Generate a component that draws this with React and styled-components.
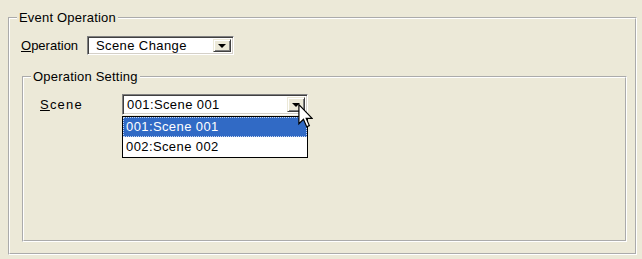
import React from 'react';
import styled, { createGlobalStyle } from 'styled-components';

const GlobalStyle = createGlobalStyle`
  html, body {
    margin: 0;
    padding: 0;
    background: #ece9d8;
  }
  body {
    width: 642px;
    height: 259px;
    overflow: hidden;
    font-family: "Liberation Sans", Arial, sans-serif;
    font-size: 13px;
    color: #000;
  }
`;

const Window = styled.div`
  padding: 10px 0 0 8px;
`;

const Group = styled.fieldset`
  box-sizing: border-box;
  min-width: 0;
  width: ${(p) => p.$w}px;
  height: ${(p) => p.$h}px;
  margin: ${(p) => p.$margin || '0'};
  padding: 0 7px;
  border: 2px groove #fff;
`;

const Legend = styled.legend`
  padding: 0 2px;
  line-height: 16px;
  letter-spacing: 0.2px;
`;

const Row = styled.div`
  display: flex;
  align-items: center;
  margin: ${(p) => p.$margin};
`;

const Label = styled.span`
  width: ${(p) => p.$w}px;
  flex: none;
  letter-spacing: ${(p) => p.$ls || 0}px;
`;

const Key = styled.span`
  text-decoration: underline;
`;

const Combo = styled.div`
  position: relative;
  box-sizing: border-box;
  width: ${(p) => p.$w}px;
  height: ${(p) => p.$h}px;
  display: flex;
  align-items: center;
  background: #fff;
  border: 1px solid;
  border-color: #808080 #fff #fff #808080;
  box-shadow: inset 1px 1px 0 #404040, inset -1px -1px 0 #d4d0c8;
  padding: 2px;
`;

const ComboText = styled.span`
  flex: 1;
  padding-left: ${(p) => p.$pl}px;
  white-space: nowrap;
  letter-spacing: 0.4px;
`;

const DropButton = styled.div`
  box-sizing: border-box;
  width: 18px;
  height: 100%;
  display: flex;
  align-items: center;
  justify-content: center;
  background: #ece9d8;
  border: 1px solid;
  border-color: #ece9d8 #404040 #404040 #ece9d8;
  box-shadow: inset 1px 1px 0 #fff, inset -1px -1px 0 #808080;
`;

const Arrow = styled.span`
  width: 0;
  height: 0;
  border-left: 4px solid transparent;
  border-right: 4px solid transparent;
  border-top: 4px solid #000;
  margin-top: 1px;
`;

const List = styled.div`
  position: absolute;
  left: -1px;
  top: calc(100% + 2px);
  box-sizing: border-box;
  width: calc(100% + 2px);
  background: #fff;
  border: 1px solid #000;
`;

const Item = styled.div`
  box-sizing: border-box;
  height: 20px;
  line-height: 18px;
  padding-left: 2px;
  letter-spacing: 0.4px;
  color: ${(p) => (p.$active ? '#fff' : '#000')};
  background: ${(p) => (p.$active ? '#316ac5' : '#fff')};
  border: 1px ${(p) => (p.$active ? 'dotted #c9d7ef' : 'solid transparent')};
`;

const Cursor = styled.svg`
  position: absolute;
  left: 175px;
  top: 9px;
`;

const Dropdown = ({ width, height, value, pad, children }) => (
  <Combo $w={width} $h={height}>
    <ComboText $pl={pad}>{value}</ComboText>
    <DropButton>
      <Arrow />
    </DropButton>
    {children}
  </Combo>
);

const scenes = ['001:Scene 001', '002:Scene 002'];

export default function App() {
  return (
    <>
      <GlobalStyle />
      <Window>
        <Group $w={629} $h={245}>
          <Legend>Event Operation</Legend>
          <Row $margin="10px 0 0 4px">
            <Label $w={66}>
              <Key>O</Key>peration
            </Label>
            <Dropdown width={147} height={19} value="Scene Change" pad={6} />
          </Row>
          <Group $w={605} $h={173} $margin="14px 0 0 5px">
            <Legend>Operation Setting</Legend>
            <Row $margin="9px 0 0 9px">
              <Label $w={82} $ls={1.2}>
                <Key>S</Key>cene
              </Label>
              <Dropdown width={186} height={21} value="001:Scene 001" pad={2}>
                <List>
                  {scenes.map((s, i) => (
                    <Item key={s} $active={i === 0}>
                      {s}
                    </Item>
                  ))}
                </List>
                <Cursor width="15" height="24" viewBox="0 0 12 20">
                  <path
                    d="M0.5 0.5 L0.5 16.5 L4.3 12.8 L7 19 L9.2 18 L6.6 12 L11.5 12 Z"
                    fill="#fff"
                    stroke="#000"
                    strokeWidth="1"
                    strokeLinejoin="miter"
                  />
                </Cursor>
              </Dropdown>
            </Row>
          </Group>
        </Group>
      </Window>
    </>
  );
}
